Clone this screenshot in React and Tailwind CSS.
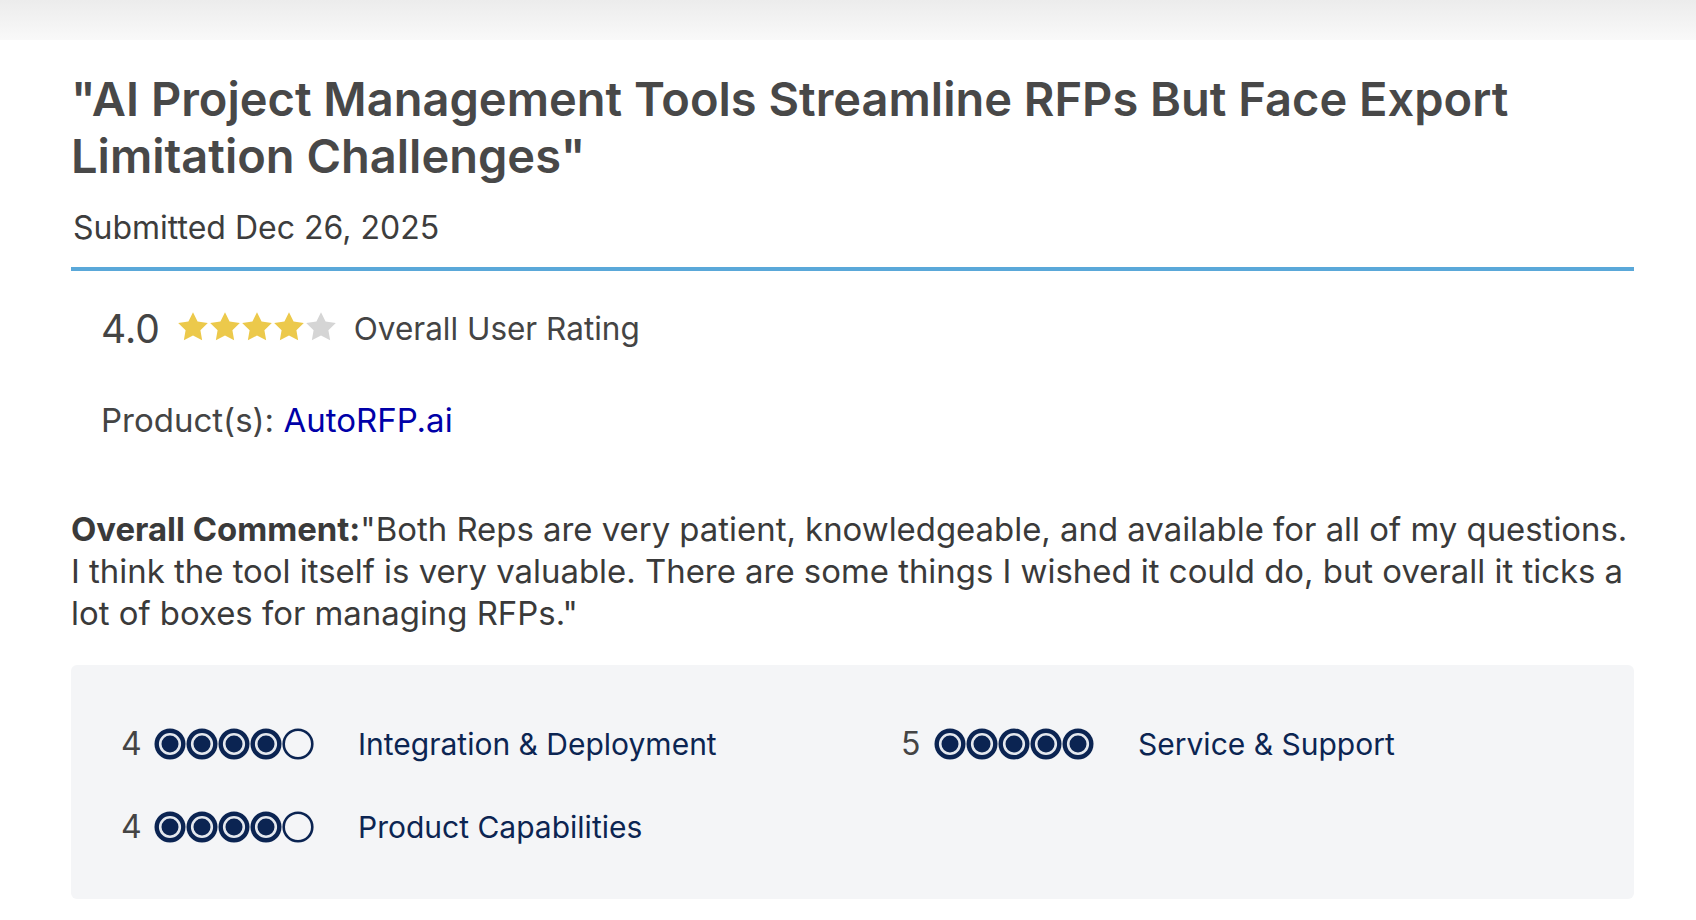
import React from 'react';

const NAVY = '#0b2452';

const Star = ({ filled }) => (
  <svg width="32" height="32" viewBox="1.2 1.2 21.6 21.6">
    <path
      d="M12 2l3.09 6.26L22 9.27l-5 4.87 1.18 6.88L12 17.77l-6.18 3.25L7 14.14 2 9.27l6.91-1.01L12 2z"
      fill={filled ? '#ecc94b' : '#d5d5d5'}
    />
  </svg>
);

const Dot = ({ filled }) => (
  <svg width="32" height="32" viewBox="0 0 32 32">
    {filled ? (
      <>
        <circle cx="16" cy="16" r="15.5" fill={NAVY} />
        <circle cx="16" cy="16" r="9.8" fill="none" stroke="#e4e8ee" strokeWidth="2.6" />
      </>
    ) : (
      <circle cx="16" cy="16" r="14.3" fill="none" stroke={NAVY} strokeWidth="2.6" />
    )}
  </svg>
);

const SubRating = ({ score, label }) => (
  <div className="flex items-center h-[40px]">
    <span className="w-[33px] text-[32px] leading-[40px] text-[#444]">{score}</span>
    <div className="flex">
      {[1, 2, 3, 4, 5].map(i => <Dot key={i} filled={i <= score} />)}
    </div>
    <span className="ml-[44px] text-[30px] leading-[40px] text-[#0c2552]">{label}</span>
  </div>
);

export default function App() {
  return (
    <div className="min-h-[920px] bg-white font-['Inter',sans-serif]">
      <div className="h-[40px] bg-gradient-to-b from-[#ececec] to-[#f9f9f9]" />
      <div className="pl-[71px] pr-[62px]">
        <h1 className="mt-[30px] text-[47px] leading-[57px] font-semibold text-[#484848]">
          "AI Project Management Tools Streamline RFPs But Face Export Limitation Challenges"
        </h1>
        <p className="mt-[24px] text-[32px] leading-[40px] text-[#3d3d3d] pl-[2px]">Submitted Dec 26, 2025</p>
        <div className="mt-[19px] h-[4px] bg-[#5aa8d9]" />

        <div className="mt-[34px] pl-[30px] flex items-center h-[48px]">
          <span className="text-[39px] leading-[48px] text-[#444]">4.0</span>
          <div className="ml-[17px] mt-[-4px] flex">
            {[1, 2, 3, 4, 5].map(i => <Star key={i} filled={i <= 4} />)}
          </div>
          <span className="ml-[17px] text-[31.5px] leading-[48px] text-[#444]">Overall User Rating</span>
        </div>

        <p className="mt-[47px] pl-[30px] text-[33px] leading-[40px] text-[#444]">
          Product(s): <span className="text-[#0000a8]">AutoRFP.ai</span>
        </p>

        <p className="mt-[68px] text-[32.9px] leading-[42px] text-[#3a3a3a]">
          <span className="font-bold">Overall Comment:</span>"Both Reps are very patient, knowledgeable, and available for all of my questions. I think the tool itself is very valuable. There are some things I wished it could do, but overall it ticks a lot of boxes for managing RFPs."
        </p>

        <div className="mt-[31px] h-[234px] rounded-[6px] bg-[#f4f5f7] pl-[50px] pt-[59px]">
          <div className="grid grid-cols-[780px_1fr] gap-y-[43px]">
            <SubRating score={4} label="Integration & Deployment" />
            <SubRating score={5} label="Service & Support" />
            <SubRating score={4} label="Product Capabilities" />
          </div>
        </div>
      </div>
    </div>
  );
}
